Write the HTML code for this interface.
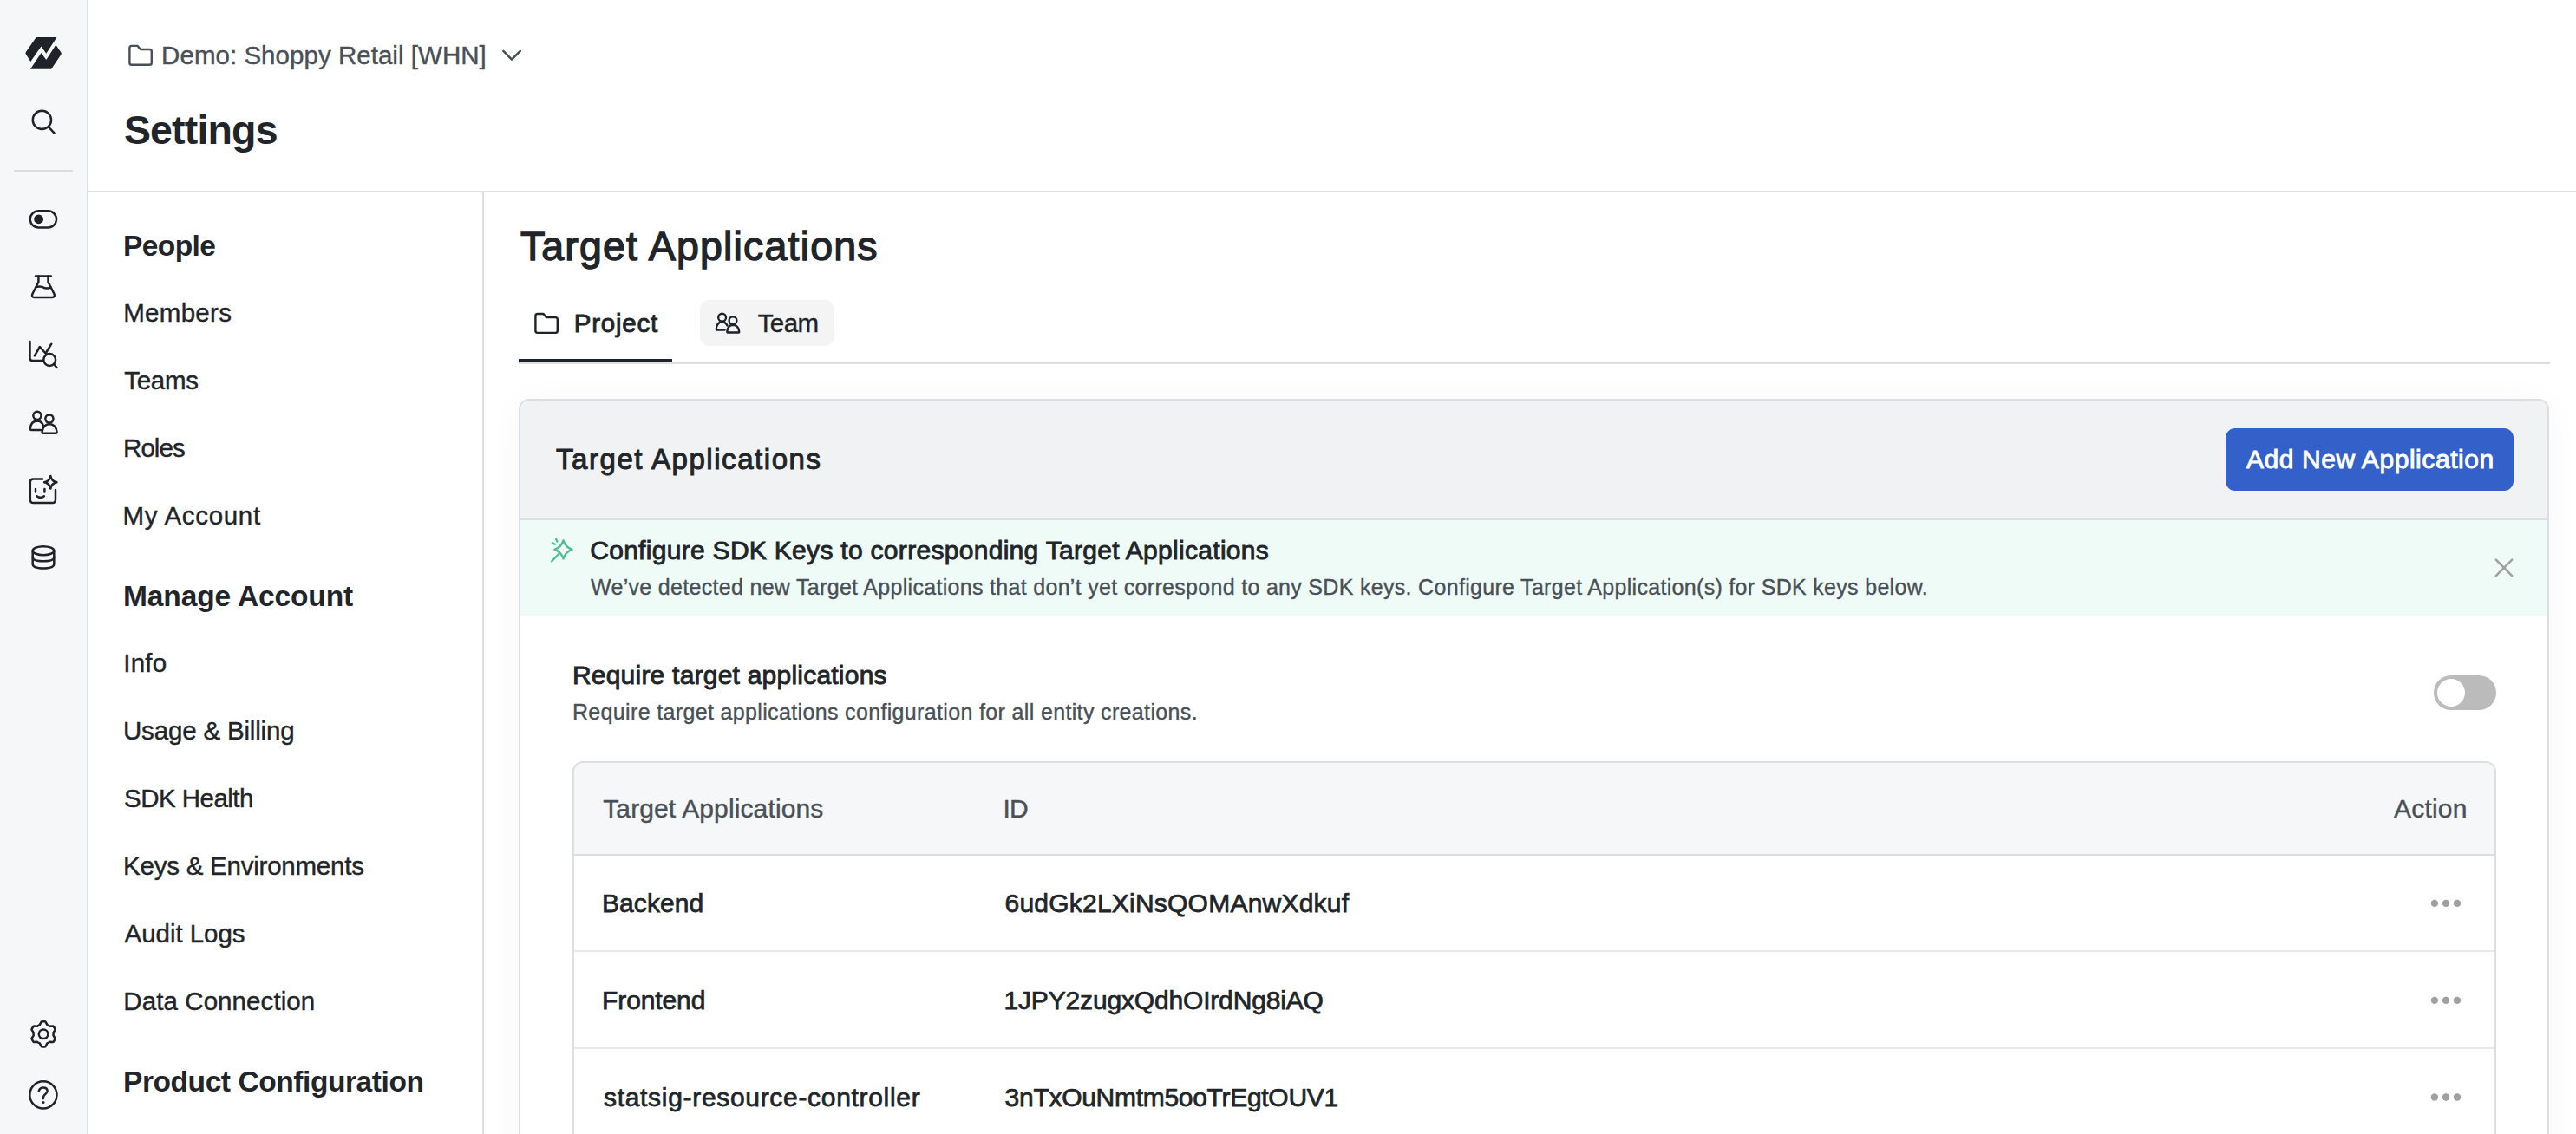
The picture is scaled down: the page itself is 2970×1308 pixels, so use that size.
<!DOCTYPE html>
<html><head><meta charset="utf-8"><title>Settings - Target Applications</title>
<style>
html,body{margin:0;padding:0;}
body{width:2970px;height:1308px;overflow:hidden;position:relative;background:#ffffff;font-family:"Liberation Sans", sans-serif;}
</style></head><body>
<div style="position:absolute;left:0px;top:0px;width:100px;height:1308px;background:#f6f7f9"></div>
<div style="position:absolute;left:100px;top:0px;width:2px;height:1308px;background:#dcdee3"></div>
<div style="position:absolute;left:16px;top:196px;width:68px;height:2px;background:#dcdee3"></div>
<div style="position:absolute;left:102px;top:220px;width:2868px;height:2px;background:#dcdee3"></div>
<div style="position:absolute;left:556px;top:222px;width:2px;height:1086px;background:#dcdee3"></div>
<div style="position:absolute;left:598px;top:418px;width:2342px;height:2px;background:#dcdee3"></div>
<div style="position:absolute;left:598px;top:414px;width:177px;height:4px;background:#1f2228"></div>
<div style="position:absolute;left:807px;top:346px;width:155px;height:53px;background:#f4f4f5;border-radius:11px"></div>
<div style="position:absolute;left:598px;top:460px;width:2341px;height:900px;box-sizing:border-box;border:2px solid #dcdee3;border-radius:12px;background:#fff;box-shadow:0 4px 40px rgba(0,0,0,0.035);overflow:hidden"><div style="position:absolute;left:0;top:0;right:0;height:136px;background:#f1f2f4;border-bottom:2px solid #dcdee3"></div><div style="position:absolute;left:0;top:138px;right:0;height:110px;background:#eefbf6"></div></div>
<div style="position:absolute;left:2566px;top:494px;width:332px;height:72px;background:#3461c9;border-radius:11px"></div>
<div style="position:absolute;left:2806px;top:779px;width:72px;height:40px;background:#bbbbbb;border-radius:20px"></div>
<div style="position:absolute;left:2810px;top:783px;width:32px;height:32px;background:#ffffff;border-radius:16px"></div>
<div style="position:absolute;left:660px;top:878px;width:2218px;height:600px;box-sizing:border-box;border:2px solid #dcdee3;border-radius:12px;background:#fff;overflow:hidden"><div style="position:absolute;left:0;top:0;right:0;height:105px;background:#f6f7f9;border-bottom:2px solid #dcdee3"></div><div style="position:absolute;left:0;top:216px;right:0;height:2px;background:#e8e9ec"></div><div style="position:absolute;left:0;top:328px;right:0;height:2px;background:#e8e9ec"></div></div>
<div style="position:absolute;left:186.1px;top:49px;font-size:29.5px;line-height:1;font-weight:400;letter-spacing:0.037px;color:#495057;white-space:nowrap;-webkit-text-stroke:0.41px #495057;">Demo: Shoppy Retail [WHN]</div>
<div style="position:absolute;left:142.9px;top:127px;font-size:46.5px;line-height:1;font-weight:700;letter-spacing:-0.829px;color:#212529;white-space:nowrap;">Settings</div>
<div style="position:absolute;left:142px;top:267px;font-size:33.5px;line-height:1;font-weight:700;letter-spacing:-0.6px;color:#212529;white-space:nowrap;">People</div>
<div style="position:absolute;left:142.2px;top:346px;font-size:29.5px;line-height:1;font-weight:400;letter-spacing:0.3px;color:#212529;white-space:nowrap;-webkit-text-stroke:0.41px #212529;">Members</div>
<div style="position:absolute;left:143.2px;top:424px;font-size:29.5px;line-height:1;font-weight:400;letter-spacing:-0.275px;color:#212529;white-space:nowrap;-webkit-text-stroke:0.41px #212529;">Teams</div>
<div style="position:absolute;left:142px;top:502px;font-size:29.5px;line-height:1;font-weight:400;letter-spacing:-0.925px;color:#212529;white-space:nowrap;-webkit-text-stroke:0.41px #212529;">Roles</div>
<div style="position:absolute;left:141.5px;top:580px;font-size:29.5px;line-height:1;font-weight:400;letter-spacing:0.678px;color:#212529;white-space:nowrap;-webkit-text-stroke:0.41px #212529;">My Account</div>
<div style="position:absolute;left:142px;top:671px;font-size:33.5px;line-height:1;font-weight:700;letter-spacing:-0.123px;color:#212529;white-space:nowrap;">Manage Account</div>
<div style="position:absolute;left:142.3px;top:750px;font-size:29.5px;line-height:1;font-weight:400;letter-spacing:0.2px;color:#212529;white-space:nowrap;-webkit-text-stroke:0.41px #212529;">Info</div>
<div style="position:absolute;left:142px;top:828px;font-size:29.5px;line-height:1;font-weight:400;letter-spacing:-0.179px;color:#212529;white-space:nowrap;-webkit-text-stroke:0.41px #212529;">Usage &amp; Billing</div>
<div style="position:absolute;left:143px;top:906px;font-size:29.5px;line-height:1;font-weight:400;letter-spacing:-0.522px;color:#212529;white-space:nowrap;-webkit-text-stroke:0.41px #212529;">SDK Health</div>
<div style="position:absolute;left:142px;top:984px;font-size:29.5px;line-height:1;font-weight:400;letter-spacing:-0.228px;color:#212529;white-space:nowrap;-webkit-text-stroke:0.41px #212529;">Keys &amp; Environments</div>
<div style="position:absolute;left:143.5px;top:1062px;font-size:29.5px;line-height:1;font-weight:400;letter-spacing:-0.033px;color:#212529;white-space:nowrap;-webkit-text-stroke:0.41px #212529;">Audit Logs</div>
<div style="position:absolute;left:142.3px;top:1140px;font-size:29.5px;line-height:1;font-weight:400;letter-spacing:0.086px;color:#212529;white-space:nowrap;-webkit-text-stroke:0.41px #212529;">Data Connection</div>
<div style="position:absolute;left:142px;top:1231px;font-size:33.5px;line-height:1;font-weight:700;letter-spacing:-0.425px;color:#212529;white-space:nowrap;">Product Configuration</div>
<div style="position:absolute;left:599.9px;top:261px;font-size:46.5px;line-height:1;font-weight:400;letter-spacing:1.183px;color:#212529;white-space:nowrap;-webkit-text-stroke:1.40px #212529;">Target Applications</div>
<div style="position:absolute;left:661.8px;top:358px;font-size:29.5px;line-height:1;font-weight:400;letter-spacing:0.767px;color:#212529;white-space:nowrap;-webkit-text-stroke:0.89px #212529;">Project</div>
<div style="position:absolute;left:873.7px;top:358px;font-size:29.5px;line-height:1;font-weight:400;letter-spacing:-0.567px;color:#212529;white-space:nowrap;-webkit-text-stroke:0.41px #212529;">Team</div>
<div style="position:absolute;left:641px;top:513px;font-size:33px;line-height:1;font-weight:400;letter-spacing:1.556px;color:#212529;white-space:nowrap;-webkit-text-stroke:0.99px #212529;">Target Applications</div>
<div style="position:absolute;left:2590px;top:515px;font-size:30px;line-height:1;font-weight:400;letter-spacing:0.556px;color:#ffffff;white-space:nowrap;-webkit-text-stroke:0.90px #ffffff;">Add New Application</div>
<div style="position:absolute;left:680.2px;top:620px;font-size:30px;line-height:1;font-weight:400;letter-spacing:0.298px;color:#212529;white-space:nowrap;-webkit-text-stroke:0.90px #212529;">Configure SDK Keys to corresponding Target Applications</div>
<div style="position:absolute;left:681px;top:665px;font-size:25px;line-height:1;font-weight:400;letter-spacing:0.309px;color:#495057;white-space:nowrap;-webkit-text-stroke:0.35px #495057;">We’ve detected new Target Applications that don’t yet correspond to any SDK keys. Configure Target Application(s) for SDK keys below.</div>
<div style="position:absolute;left:659.9px;top:764px;font-size:30px;line-height:1;font-weight:400;letter-spacing:0.223px;color:#212529;white-space:nowrap;-webkit-text-stroke:0.90px #212529;">Require target applications</div>
<div style="position:absolute;left:659.9px;top:809px;font-size:25px;line-height:1;font-weight:400;letter-spacing:0.35px;color:#495057;white-space:nowrap;-webkit-text-stroke:0.35px #495057;">Require target applications configuration for all entity creations.</div>
<div style="position:absolute;left:695.2px;top:918px;font-size:30px;line-height:1;font-weight:400;letter-spacing:0.128px;color:#495057;white-space:nowrap;-webkit-text-stroke:0.42px #495057;">Target Applications</div>
<div style="position:absolute;left:1156.6px;top:918px;font-size:30px;line-height:1;font-weight:400;letter-spacing:-0.9px;color:#495057;white-space:nowrap;-webkit-text-stroke:0.42px #495057;">ID</div>
<div style="position:absolute;left:2760px;top:918px;font-size:30px;line-height:1;font-weight:400;letter-spacing:0.2px;color:#495057;white-space:nowrap;-webkit-text-stroke:0.42px #495057;">Action</div>
<div style="position:absolute;left:694px;top:1027px;font-size:30px;line-height:1;font-weight:400;letter-spacing:0.067px;color:#212529;white-space:nowrap;-webkit-text-stroke:0.75px #212529;">Backend</div>
<div style="position:absolute;left:1158.5px;top:1027px;font-size:30px;line-height:1;font-weight:400;letter-spacing:0.224px;color:#212529;white-space:nowrap;-webkit-text-stroke:0.75px #212529;">6udGk2LXiNsQOMAnwXdkuf</div>
<div style="position:absolute;left:694.1px;top:1139px;font-size:30px;line-height:1;font-weight:400;letter-spacing:-0.114px;color:#212529;white-space:nowrap;-webkit-text-stroke:0.75px #212529;">Frontend</div>
<div style="position:absolute;left:1157.5px;top:1139px;font-size:30px;line-height:1;font-weight:400;letter-spacing:-0.167px;color:#212529;white-space:nowrap;-webkit-text-stroke:0.75px #212529;">1JPY2zugxQdhOIrdNg8iAQ</div>
<div style="position:absolute;left:696px;top:1251px;font-size:30px;line-height:1;font-weight:400;letter-spacing:0.688px;color:#212529;white-space:nowrap;-webkit-text-stroke:0.75px #212529;">statsig-resource-controller</div>
<div style="position:absolute;left:1158.6px;top:1251px;font-size:30px;line-height:1;font-weight:400;letter-spacing:-0.29px;color:#212529;white-space:nowrap;-webkit-text-stroke:0.75px #212529;">3nTxOuNmtm5ooTrEgtOUV1</div>
<svg style="position:absolute;left:0;top:0" width="2970" height="1308" viewBox="0 0 2970 1308">
<g fill="none" stroke-linecap="round" stroke-linejoin="round">
 <!-- logo -->
 <g fill="#1f2228" stroke="none">
  <path d="M41.7,43 L65.5,43 L53.3,61.7 L47.5,53.5 L35.3,71 L29.8,62.5 Q29,61.2 29.9,60 Z"/>
  <path d="M35,79.7 L47.5,61 L53.3,68.9 L64.4,51.7 L70.4,60.6 Q71.2,61.8 70.4,63 L59.1,79.7 Z"/>
 </g>
 <g stroke="#1f2228" stroke-width="2.5">
  <!-- search -->
  <circle cx="48.4" cy="138.4" r="10.6"/>
  <path d="M56,146.5 L62.5,153.3"/>
  <!-- toggle -->
  <rect x="34.8" y="243.3" width="30.2" height="19.2" rx="9.6"/>
  <circle cx="44.6" cy="252.8" r="5.4" fill="#1f2228" stroke="none"/>
  <!-- flask -->
  <path d="M41,318.6 L58.8,318.6"/>
  <path d="M44.4,318.6 L44.4,325.3 L37.3,339.3 Q36,343 39.8,343 L60,343 Q63.8,343 62.6,339.3 L55.5,325.3 L55.5,318.6"/>
  <path d="M41.6,331.2 Q45,329.8 48.5,330.9 Q52,332.7 54.7,332.6 Q56.6,332.4 58.3,331.6"/>
  <!-- chart search -->
  <path d="M34.5,394 L34.5,413 Q34.5,416 37.5,416 L49.5,416"/>
  <path d="M39.9,410.3 L45.9,400 L53,408 M59.3,396.7 L52.6,407.5"/>
  <circle cx="57.2" cy="415" r="6.9"/>
  <path d="M62,420.2 L65.6,424"/>
  <!-- people -->
  <circle cx="42.9" cy="479.3" r="4.6"/>
  <path d="M34.8,494.5 Q35.5,486 42.6,485.5 Q48.5,485.5 50.5,492 M34.8,494.5 Q34.6,496 36.5,496 L47,496"/>
  <circle cx="56.9" cy="483" r="4.6"/>
  <path d="M48.5,498.5 Q49.5,489.5 57,489 Q64.7,489.5 65.6,498.5 Q65.7,499.8 64.3,499.8 L49.8,499.8 Q48.3,499.8 48.5,498.5 Z"/>
  <!-- face sparkle -->
  <path d="M49,552.5 L38.5,552.5 Q34.8,552.5 34.8,556.3 L34.8,576.2 Q34.8,580 38.5,580 L60.3,580 Q64,580 64,576.2 L64,565"/>
  <path d="M58.3,549 Q59.3,555 65.5,556.3 Q59.3,557.6 58.3,563.6 Q57.3,557.6 51.1,556.3 Q57.3,555 58.3,549 Z"/>
  <path d="M41,564 L41,567.5 M51.4,564 L51.4,567.5"/>
  <path d="M42.5,572.3 Q46.7,575.5 50.9,572.3"/>
  <!-- database -->
  <ellipse cx="50" cy="635.2" rx="12.3" ry="5"/>
  <path d="M37.7,635.2 L37.7,650.5 Q37.7,655.5 50,655.5 Q62.3,655.5 62.3,650.5 L62.3,635.2"/>
  <path d="M37.7,642.8 Q37.7,647.3 50,647.3 Q62.3,647.3 62.3,642.8"/>
  <!-- gear -->
  <path d="M45.79,1182.14 L47.82,1178.38 A14.6,14.6 0 0 1 52.38,1178.38 L54.41,1182.14 A11.5,11.5 0 0 1 57.18,1183.74 L61.45,1183.61 A14.6,14.6 0 0 1 63.73,1187.57 L61.49,1191.20 A11.5,11.5 0 0 1 61.49,1194.40 L63.73,1198.03 A14.6,14.6 0 0 1 61.45,1201.99 L57.18,1201.86 A11.5,11.5 0 0 1 54.41,1203.46 L52.38,1207.22 A14.6,14.6 0 0 1 47.82,1207.22 L45.79,1203.46 A11.5,11.5 0 0 1 43.02,1201.86 L38.75,1201.99 A14.6,14.6 0 0 1 36.47,1198.03 L38.71,1194.40 A11.5,11.5 0 0 1 38.71,1191.20 L36.47,1187.57 A14.6,14.6 0 0 1 38.75,1183.61 L43.02,1183.74 A11.5,11.5 0 0 1 45.79,1182.14 Z"/>
  <circle cx="50.1" cy="1192.8" r="5.3"/>
  <!-- help -->
  <circle cx="49.9" cy="1262.9" r="15.6"/>
  <path d="M44.7,1258.6 Q45.9,1254.4 49.9,1254.4 Q54.6,1254.4 54.6,1258.3 Q54.6,1260 53,1261.3 L51.6,1262.6 Q50.1,1264 50,1265.8 L49.9,1267.2"/>
 </g>
 <circle cx="49.9" cy="1271.5" r="1.6" fill="#1f2228"/>
 <!-- header folder + chevron -->
 <g stroke="#495057" stroke-width="2.4">
  <path d="M149.4,55.2 Q149.4,52.9 151.7,52.9 L158.5,52.9 L162,57 L172.5,57 Q174.8,57 174.8,59.3 L174.8,72.5 Q174.8,74.8 172.5,74.8 L151.7,74.8 Q149.4,74.8 149.4,72.5 Z"/>
  <path d="M580.4,58.9 L590,68.6 L599.8,58.9" stroke-width="2.6"/>
 </g>
 <!-- tab icons -->
 <g stroke="#1f2228" stroke-width="2.4">
  <path d="M617.4,364.3 Q617.4,362 619.7,362 L626.5,362 L630,366.1 L640.5,366.1 Q642.8,366.1 642.8,368.4 L642.8,381.6 Q642.8,383.9 640.5,383.9 L619.7,383.9 Q617.4,383.9 617.4,381.6 Z"/>
  <circle cx="832.6" cy="366.2" r="4.4"/>
  <path d="M825.8,379.5 Q826.5,371.5 832.4,371.2 Q836.5,371.2 838.5,375.5 M825.8,379.5 Q825.7,380.5 827,380.5 L835.5,380.5"/>
  <circle cx="845" cy="369.7" r="4.4"/>
  <path d="M838.3,382.6 Q839,375 845,374.7 Q851.5,375 852.2,382.6 Q852.3,383.5 851.2,383.5 L839.3,383.5 Q838.2,383.5 838.3,382.6 Z"/>
 </g>
 <!-- sparkle green -->
 <g stroke="#4cbf96" stroke-width="2.4">
  <path d="M649.5,623.3 Q652.1,631.2 659.6,633.8 Q652.1,636.4 649.5,644.3 Q646.9,636.4 639.4,633.8 Q646.9,631.2 649.5,623.3 Z"/>
  <path d="M645,638 L636,647.5"/>
  <path d="M641,621.8 L642.4,624.4 M637,626.2 L639.7,627.8"/>
 </g>
 <!-- close X -->
 <g stroke="#a0a0a0" stroke-width="2.5">
  <path d="M2877.8,645.6 L2896.2,664.2 M2896.2,645.6 L2877.8,664.2"/>
 </g>
 <!-- dots -->
 <g fill="#a0a0a0">
  <circle cx="2806.9" cy="1041.9" r="4.2"/><circle cx="2820" cy="1041.9" r="4.2"/><circle cx="2833" cy="1041.9" r="4.2"/>
  <circle cx="2806.9" cy="1153.9" r="4.2"/><circle cx="2820" cy="1153.9" r="4.2"/><circle cx="2833" cy="1153.9" r="4.2"/>
  <circle cx="2806.9" cy="1265.5" r="4.2"/><circle cx="2820" cy="1265.5" r="4.2"/><circle cx="2833" cy="1265.5" r="4.2"/>
 </g>
</g>
</svg>

</body></html>
